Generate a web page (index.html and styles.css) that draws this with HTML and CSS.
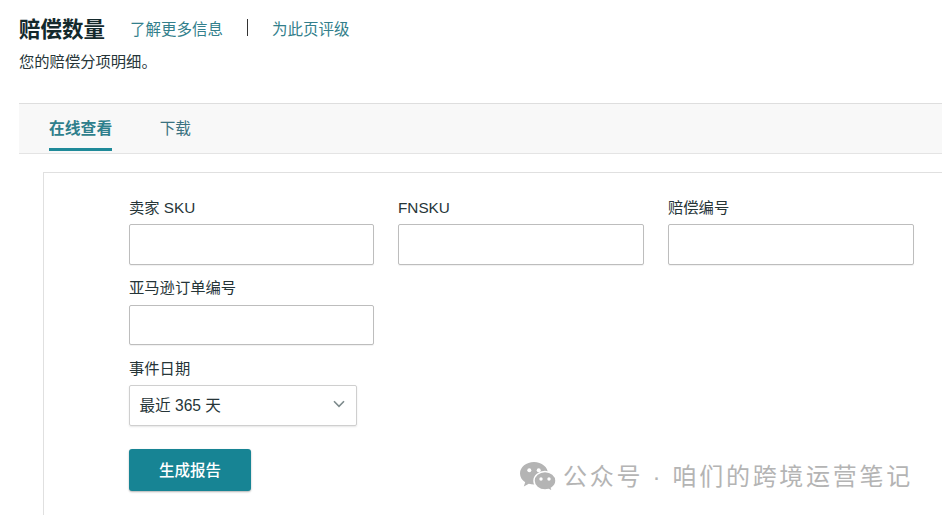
FILE: index.html
```html
<!DOCTYPE html>
<html>
	<head>
		<title>赔偿数量</title>
		<link rel="stylesheet" href="styles.css">
	</head>
	<body>
		<div class="page-head">
			<div class="title-row">
				<h1>赔偿数量</h1>
				<a class="head-link" href="#">了解更多信息</a>
				<span class="head-sep"></span>
				<a class="head-link" href="#">为此页评级</a>
			</div>
			<p class="subtitle">您的赔偿分项明细。</p>
		</div>

		<div class="tabs">
			<a class="tab active" href="#">在线查看</a>
			<a class="tab" href="#">下载</a>
		</div>

		<div class="panel">
			<div class="form-row">
				<div class="field">
					<label for="sku">卖家 SKU</label>
					<input type="text" id="sku" />
				</div>
				<div class="field">
					<label for="fnsku">FNSKU</label>
					<input type="text" id="fnsku" />
				</div>
				<div class="field">
					<label for="claim">赔偿编号</label>
					<input type="text" id="claim" />
				</div>
			</div>
			<div class="form-row">
				<div class="field">
					<label for="order">亚马逊订单编号</label>
					<input type="text" id="order" />
				</div>
			</div>
			<div class="field">
				<label>事件日期</label>
				<div class="select">
					<span>最近 365 天</span>
					<svg width="12" height="8" viewBox="0 0 12 8"><path d="M1 1.2 6 6.4 11 1.2" fill="none" stroke="#7d8a8c" stroke-width="1.6"/></svg>
				</div>
			</div>
			<button class="submit">生成报告</button>
		</div>

		<!-- 公众号水印 -->
		<div class="watermark">
			<svg width="36" height="30" viewBox="0 0 36 30">
				<path d="M14 0C6.3 0 0 5.1 0 11.4c0 3.6 2 6.7 5.200 8.800L3.800 24.500l5-2.700c1.700.5 3.400.8 5.200.8 7.700 0 14-5.100 14-11.200S21.700 0 14 0z" fill="#b4b4b4"/>
				<path d="M25 9.500c-6 0-11 4.200-11 9.300s5 9.200 11 9.200c1.300 0 2.500-.2 3.700-.5l3.800 2.100-1-3.400c2.700-1.700 4.500-4.400 4.500-7.400 0-5.100-5-9.300-11-9.300z" fill="#b4b4b4" stroke="#fff" stroke-width="1.500"/>
				<circle cx="9.300" cy="8.300" r="2" fill="#fff"/>
				<circle cx="18.700" cy="8.300" r="2" fill="#fff"/>
				<circle cx="21" cy="17" r="1.700" fill="#fff"/>
				<circle cx="29" cy="17" r="1.700" fill="#fff"/>
			</svg>
			<span>公众号 · 咱们的跨境运营笔记</span>
		</div>
	</body>
</html>
```

FILE: styles.css
```css
html,
body {
	height: 515px;
	overflow: hidden;
}

body {
	margin: 0;
	padding: 0;
	position: relative;
	background-color: #fff;
	color: #263538;
	font-family: "Liberation Sans", "Noto Sans CJK SC", sans-serif;
	font-size: 15.3px;
}

a {
	text-decoration: none;
}

.page-head {
	padding: 14px 0 0 19px;
	height: 103px;
	box-sizing: border-box;
}

.title-row {
	display: flex;
	align-items: center;
	height: 27px;
}

h1 {
	margin: 0;
	width: 111px;
	font-size: 21.5px;
	font-weight: 700;
	color: #14292c;
}

.head-link {
	color: #337f8c;
	font-size: 15.5px;
}

.head-sep {
	width: 1px;
	height: 17px;
	margin: 0 24px;
	background-color: #333;
}

.subtitle {
	margin: 9px 0 0;
	line-height: 24px;
}

.tabs {
	display: flex;
	gap: 47.5px;
	height: 51px;
	box-sizing: border-box;
	margin-left: 19px;
	padding-left: 30px;
	background-color: #f8f8f8;
	border-top: 1px solid #dedede;
	border-bottom: 1px solid #e4e4e4;
}

.tab {
	height: 49px;
	box-sizing: border-box;
	padding-top: 12px;
	color: #3a7280;
	font-size: 15.6px;
}

.tab.active {
	color: #2f7f8c;
	font-size: 15.8px;
	font-weight: 700;
	border-bottom: 3px solid #1f8a99;
	height: 47px;
}

.panel {
	margin: 18px 0 0 43px;
	padding: 23.5px 0 0 85px;
	height: 343px;
	box-sizing: border-box;
	border-top: 1px solid #e0e0e0;
	border-left: 1px solid #e0e0e0;
}

.form-row {
	display: grid;
	grid-template-columns: 245px 246px 246px;
	column-gap: 24px;
}

.field {
	margin-bottom: 12.5px;
}

.field label {
	display: block;
	height: 27.5px;
	line-height: 22px;
}

.field input {
	display: block;
	width: 100%;
	height: 40.5px;
	box-sizing: border-box;
	border: 1px solid #bdbdbd;
	border-radius: 2px;
	box-shadow: 0 1px 1px rgba(0, 0, 0, 0.06);
}

.select {
	display: flex;
	align-items: center;
	justify-content: space-between;
	width: 228px;
	height: 40.5px;
	box-sizing: border-box;
	padding: 0 11px 2px 9.500px;
	border: 1px solid #cfcfcf;
	border-radius: 2px;
	box-shadow: 0 1px 2px rgba(0, 0, 0, 0.1);
	font-size: 15.6px;
}

.submit {
	display: block;
	width: 122px;
	height: 42px;
	margin-top: 23.5px;
	padding: 0 0 3px;
	border: 0;
	border-radius: 3px;
	background-color: #178494;
	box-shadow: 0 1px 2px rgba(0, 0, 0, 0.3);
	color: #fff;
	font-family: inherit;
	font-size: 15.5px;
	font-weight: 500;
}

.watermark {
	position: absolute;
	left: 520px;
	top: 462px;
	display: flex;
	align-items: center;
	gap: 7px;
	height: 30px;
	line-height: 30px;
	color: #b4b4b4;
	font-size: 24px;
	letter-spacing: 2.7px;
	white-space: nowrap;
}
```
